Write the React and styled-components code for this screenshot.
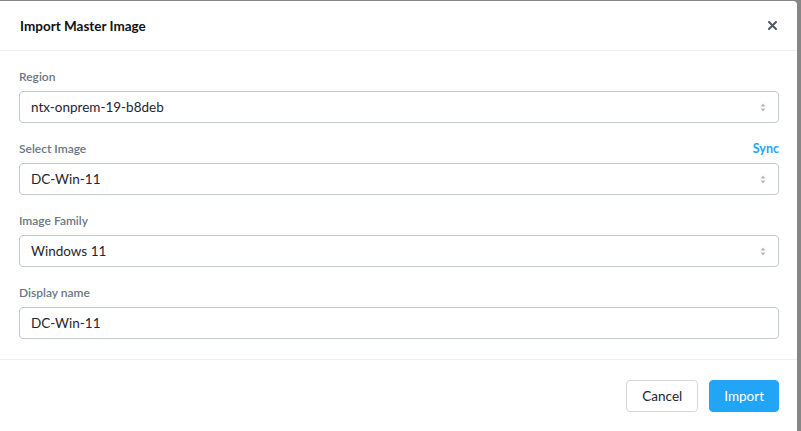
import React from 'react';
import styled, { createGlobalStyle } from 'styled-components';

const colors = {
  backdrop: '#868686',
  text: '#1d2530',
  label: '#6a7685',
  border: '#c4c9cf',
  divider: '#eceef0',
  blue: '#22a5f7',
  icon: '#4b5768',
};

const GlobalStyle = createGlobalStyle`
  html, body {
    margin: 0;
    padding: 0;
    overflow: hidden;
    background: ${colors.backdrop};
  }
  * { box-sizing: border-box; }
`;

const Backdrop = styled.div`
  width: 801px;
  height: 431px;
  padding: 1px 4px 0 0;
  background: ${colors.backdrop};
  font-family: Lato, "Open Sans", sans-serif;
  color: ${colors.text};
  overflow: hidden;
`;

const Modal = styled.div`
  margin-left: -4px;
  height: 460px;
  background: #fff;
  border-radius: 4px;
  display: flex;
  flex-direction: column;
`;

const Header = styled.header`
  height: 50px;
  padding: 0 20px 0 24px;
  display: flex;
  align-items: center;
  justify-content: space-between;
  border-bottom: 1px solid ${colors.divider};
`;

const Title = styled.h2`
  margin: 0;
  font-size: 13.5px;
  font-weight: 700;
  color: #111;
`;

const CloseButton = styled.button`
  border: none;
  background: none;
  padding: 0;
  width: 9px;
  height: 12px;
  display: flex;
  align-items: center;
  justify-content: center;
  cursor: pointer;
`;

const Body = styled.div`
  padding: 18px 18px 20px 23px;
  display: flex;
  flex-direction: column;
  gap: 18px;
  border-bottom: 1px solid ${colors.divider};
`;

const Field = styled.div`
  display: flex;
  flex-direction: column;
  gap: 8px;
`;

const LabelRow = styled.div`
  display: flex;
  justify-content: space-between;
  align-items: center;
  height: 14px;
`;

const Label = styled.label`
  font-size: 12px;
  font-weight: 600;
  color: ${colors.label};
`;

const SyncLink = styled.a`
  font-size: 12.5px;
  font-weight: 700;
  color: ${colors.blue};
  text-decoration: none;
  cursor: pointer;
`;

const InputBox = styled.div`
  height: 32px;
  border: 1px solid ${colors.border};
  border-radius: 4px;
  padding: 0 12px 0 11px;
  display: flex;
  align-items: center;
  justify-content: space-between;
  font-size: 13.5px;
  color: ${colors.text};
`;

const Footer = styled.footer`
  padding: 20px 18px 0 0;
  display: flex;
  justify-content: flex-end;
  gap: 11px;
`;

const Button = styled.button`
  height: 32px;
  padding: 0 ${({ $primary }) => ($primary ? '14px' : '15px')};
  border-radius: 4px;
  font-family: Lato, "Open Sans", sans-serif;
  font-size: 13.5px;
  border: 1px solid ${({ $primary }) => ($primary ? colors.blue : '#d3d7dc')};
  background: ${({ $primary }) => ($primary ? colors.blue : '#fff')};
  color: ${({ $primary }) => ($primary ? '#fff' : colors.text)};
  cursor: pointer;
`;

const SelectArrows = () => (
  <svg width="6" height="9" viewBox="0 0 6 9">
    <path d="M3 0.5 L5.5 3.5 H0.5 Z" fill="#b4b9c0" />
    <path d="M3 8.5 L5.5 5.5 H0.5 Z" fill="#b4b9c0" />
  </svg>
);

const CloseIcon = () => (
  <svg width="9" height="9" viewBox="0 0 9 9">
    <path d="M1 1 L8 8 M8 1 L1 8" stroke={colors.icon} strokeWidth="2" strokeLinecap="round" />
  </svg>
);

const fields = [
  { label: 'Region', value: 'ntx-onprem-19-b8deb', select: true },
  { label: 'Select Image', value: 'DC-Win-11', select: true, sync: true },
  { label: 'Image Family', value: 'Windows 11', select: true },
  { label: 'Display name', value: 'DC-Win-11', select: false },
];

export default function App() {
  return (
    <>
      <GlobalStyle />
      <Backdrop>
        <Modal>
          <Header>
            <Title>Import Master Image</Title>
            <CloseButton aria-label="Close">
              <CloseIcon />
            </CloseButton>
          </Header>
          <Body>
            {fields.map((f) => (
              <Field key={f.label}>
                <LabelRow>
                  <Label>{f.label}</Label>
                  {f.sync && <SyncLink>Sync</SyncLink>}
                </LabelRow>
                <InputBox>
                  <span>{f.value}</span>
                  {f.select && <SelectArrows />}
                </InputBox>
              </Field>
            ))}
          </Body>
          <Footer>
            <Button>Cancel</Button>
            <Button $primary>Import</Button>
          </Footer>
        </Modal>
      </Backdrop>
    </>
  );
}
